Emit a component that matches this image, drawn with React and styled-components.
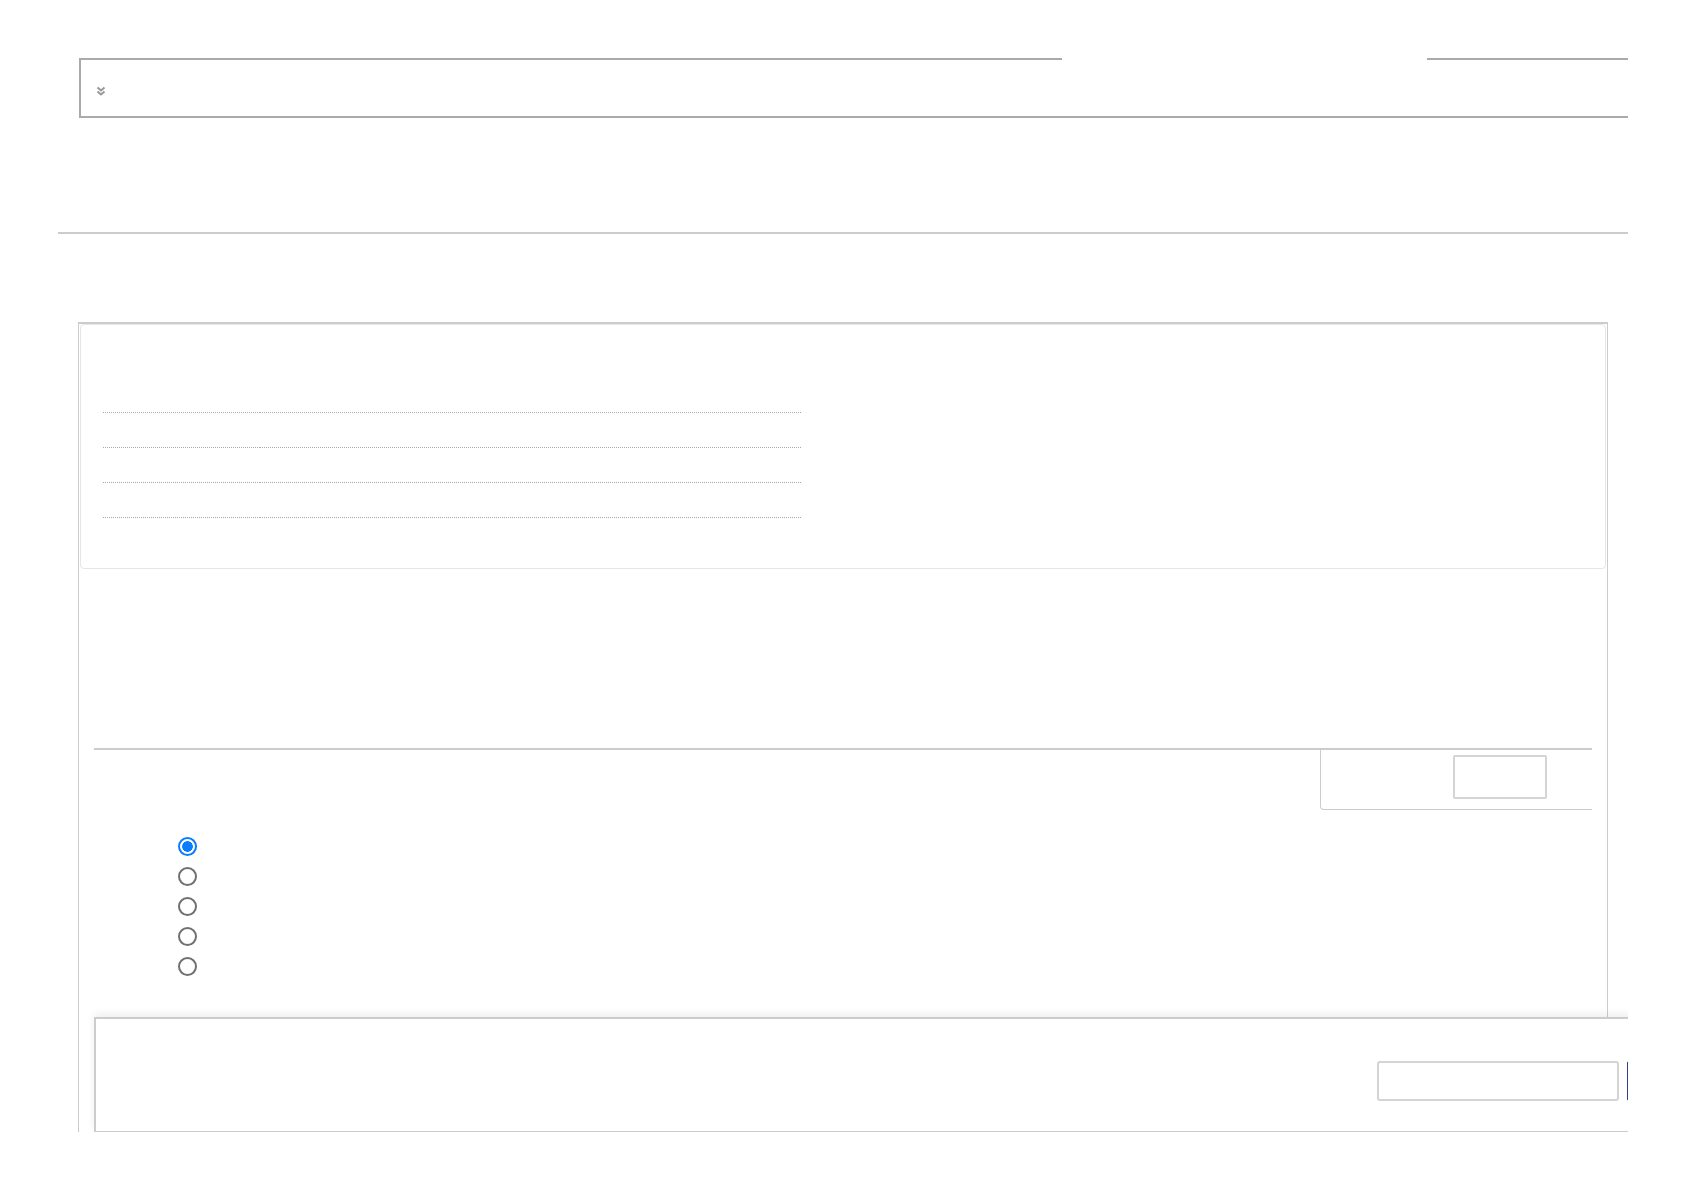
import React from "react";
import styled, { createGlobalStyle } from "styled-components";

const GlobalStyle = createGlobalStyle`
html, body {
    margin: 0;
    padding: 0;
    background: #fff;
    font-family: "Liberation Sans", Arial, sans-serif;
}
`

const Page = styled.div`
width: 1570px;
height: 1132px;
margin-left: 58px;
padding-top: 58px;
box-sizing: border-box;
overflow: hidden;
`

const TopBar = styled.div`
margin-left: 21px;
height: 60px;
box-sizing: border-box;
border-left: 2px solid #aaa;
border-bottom: 2px solid #aaa;
background-image: linear-gradient(to right, #aaa 0, #aaa 981px, transparent 981px, transparent 1346px, #aaa 1346px);
background-size: 100% 2px;
background-repeat: no-repeat;
background-position: top left;
padding: 28px 0 0 15px;
`

const Chevron = styled.svg`
display: block;
width: 10px;
height: 10px;
`

const Rule = styled.hr`
margin: 114px 0 0;
border: 0;
height: 2px;
background: #ccc;
`

const Panel = styled.section`
margin: 88px 20px 0;
border: 1px solid #ccc;
border-top: 2px solid #ccc;
border-bottom: 0;
padding-bottom: 40px;
`

const Header = styled.div`
margin: 0 1px;
border: 1px solid #e6e6e6;
border-radius: 4px;
padding: 53px 22px 50px;
`

const InfoTable = styled.table`
width: 698px;
border-collapse: collapse;

td {
    height: 34px;
    padding: 0;
    border-bottom: 1px dotted #aaa;
}

td:first-child {
    width: 157px;
}
`

const Body = styled.div`
padding: 179px 15px 0;
`

const Divider = styled.div`
height: 2px;
background: #ccc;
`

const TabRow = styled.div`
display: flex;
justify-content: flex-end;
`

const TabBox = styled.div`
width: 272px;
height: 60px;
box-sizing: border-box;
border-left: 1px solid #ccc;
border-bottom: 1px solid #ccc;
border-bottom-left-radius: 4px;
padding: 5px 45px 0 132px;
`

const SmallButton = styled.button`
display: block;
width: 94px;
height: 44px;
box-sizing: border-box;
border: 2px solid #d4d4d4;
border-radius: 2px;
background: #fff;
padding: 0;
`

const RadioList = styled.div`
display: flex;
flex-direction: column;
margin-top: 21px;
padding-left: 84px;
`

const RadioRow = styled.label`
display: flex;
align-items: center;
height: 30px;
`

const Radio = styled.input`
appearance: none;
width: 19px;
height: 19px;
margin: 0;
box-sizing: border-box;
border-radius: 50%;
border: 2px solid #707070;
background: #fff;

&:checked {
    border: 2px solid #0a7cff;
    background: radial-gradient(circle, #0a7cff 0, #0a7cff 5px, #fff 5.6px);
}
`

const Footer = styled.div`
width: 1647px;
box-sizing: border-box;
margin-top: 36px;
border: 2px solid #ccc;
background: #fff;
box-shadow: 0 -3px 8px rgba(0, 0, 0, 0.07);
padding: 42px 12px 30px 0;
display: flex;
justify-content: flex-end;
align-items: center;
gap: 8px;
`

const SearchInput = styled.input`
width: 242px;
height: 40px;
box-sizing: border-box;
border: 2px solid #d4d4d4;
border-radius: 3px;
padding: 0 8px;
`

const GoButton = styled.button`
width: 100px;
height: 40px;
border: 1px solid #2e3f8f;
background: #3b4fa8;
border-radius: 2px;
`

const rows = [0, 1, 2, 3];
const options = [0, 1, 2, 3, 4];

const App = () => {
    return (
        <>
            <GlobalStyle />
            <Page>
                <TopBar>
                    <Chevron viewBox="0 0 10 10">
                        <polyline points="1.5,1.5 5,4.5 8.5,1.5" fill="none" stroke="#999" strokeWidth="2" />
                        <polyline points="1.5,5.5 5,8.5 8.5,5.5" fill="none" stroke="#999" strokeWidth="2" />
                    </Chevron>
                </TopBar>

                <Rule />

                <Panel>
                    <Header>
                        <InfoTable>
                            <tbody>
                                {rows.map(r => (
                                    <tr key={r}>
                                        <td></td>
                                        <td></td>
                                    </tr>
                                ))}
                            </tbody>
                        </InfoTable>
                    </Header>

                    <Body>
                        <Divider />
                        <TabRow>
                            <TabBox>
                                <SmallButton type="button" />
                            </TabBox>
                        </TabRow>

                        <RadioList>
                            {options.map(o => (
                                <RadioRow key={o}>
                                    <Radio type="radio" name="choice" defaultChecked={o === 0} />
                                </RadioRow>
                            ))}
                        </RadioList>

                        <Footer>
                            <SearchInput type="text" />
                            <GoButton type="button" />
                        </Footer>
                    </Body>
                </Panel>
            </Page>
        </>
    )
}

export default App;
